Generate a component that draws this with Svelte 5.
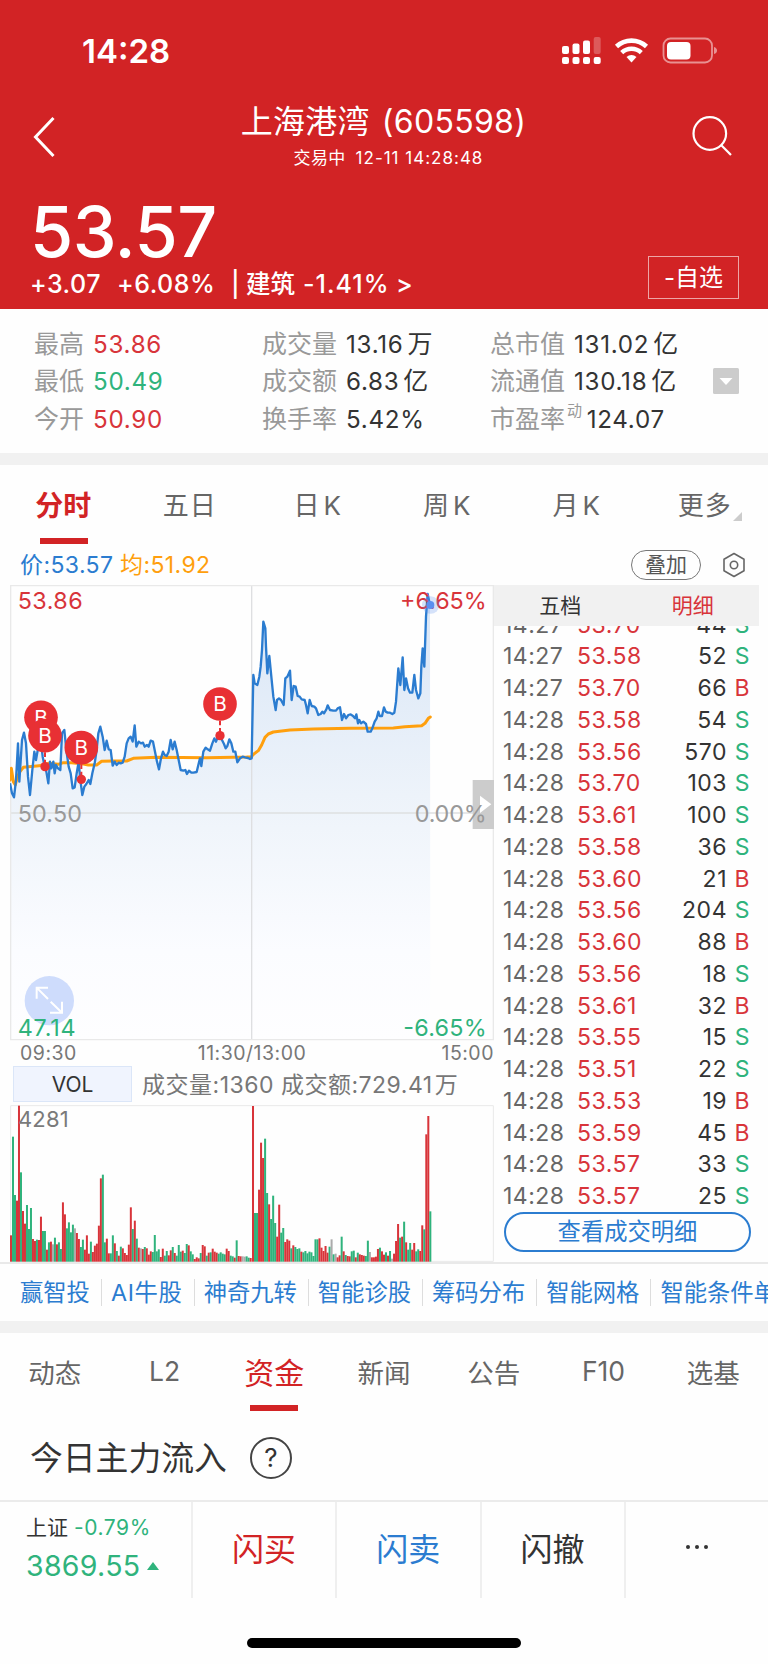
<script>
    const stats = [
        [
            { label: '最高', value: '53.86', tone: 'up' },
            { label: '最低', value: '50.49', tone: 'down' },
            { label: '今开', value: '50.90', tone: 'up' },
        ],
        [
            { label: '成交量', value: '13.16', unit: '万' },
            { label: '成交额', value: '6.83', unit: '亿' },
            { label: '换手率', value: '5.42%' },
        ],
        [
            { label: '总市值', value: '131.02', unit: '亿' },
            { label: '流通值', value: '130.18', unit: '亿' },
            { label: '市盈率', sup: '动', value: '124.07' },
        ],
    ];

    const periods = ['分时', '五日', '日K', '周K', '月K', '更多'];
    let period = $state('分时');

    const trades = [
        ['14:27', '53.70', 44, 'S'],
        ['14:27', '53.58', 52, 'S'],
        ['14:27', '53.70', 66, 'B'],
        ['14:28', '53.58', 54, 'S'],
        ['14:28', '53.56', 570, 'S'],
        ['14:28', '53.70', 103, 'S'],
        ['14:28', '53.61', 100, 'S'],
        ['14:28', '53.58', 36, 'S'],
        ['14:28', '53.60', 21, 'B'],
        ['14:28', '53.56', 204, 'S'],
        ['14:28', '53.60', 88, 'B'],
        ['14:28', '53.56', 18, 'S'],
        ['14:28', '53.61', 32, 'B'],
        ['14:28', '53.55', 15, 'S'],
        ['14:28', '53.51', 22, 'S'],
        ['14:28', '53.53', 19, 'B'],
        ['14:28', '53.59', 45, 'B'],
        ['14:28', '53.57', 33, 'S'],
        ['14:28', '53.57', 25, 'S'],
    ];

    const tools = ['赢智投', 'AI牛股', '神奇九转', '智能诊股', '筹码分布', '智能网格', '智能条件单'];

    const sections = ['动态', 'L2', '资金', '新闻', '公告', 'F10', '选基'];
    let section = $state('资金');

    // chart units are thirds of a pixel
    const price = '30,610 36,640 42,652 48,600 54,490 58,605 66,480 72,458 78,490 84,590 90,645 97,570 103,515 108,540 115,500 122,480 128,530 134,560 139,575 145,610 150,545 154,565 160,545 164,580 168,555 174,565 181,570 186,460 193,450 199,510 206,560 212,580 218,625 224,622 230,580 236,545 241,600 247,645 253,620 259,612 266,600 271,612 277,580 284,550 290,510 295,460 301,440 308,470 314,510 320,482 326,508 332,510 338,557 344,545 350,555 356,548 362,550 368,548 374,530 380,490 386,475 392,470 398,485 404,436 409,500 416,485 423,490 429,488 434,500 441,495 446,500 452,482 459,485 465,515 471,545 477,568 483,535 489,515 494,525 500,528 506,515 512,480 518,508 524,485 530,510 536,540 542,570 550,572 556,570 561,582 567,572 574,578 580,578 590,576 595,555 600,535 604,558 610,515 617,503 623,508 630,512 637,490 643,475 648,485 654,470 660,460 666,480 672,492 677,505 682,498 688,478 694,490 700,515 706,515 712,547 720,535 728,530 735,532 744,534 750,537 755,535 760,285 764,310 772,315 778,290 782,260 786,210 790,125 796,145 798,200 802,280 808,228 814,290 820,350 827,390 831,360 837,355 843,360 851,375 856,295 862,290 870,272 875,360 881,318 887,320 893,348 899,350 905,358 914,360 918,375 923,400 929,360 935,378 943,380 948,385 955,405 962,402 967,395 972,400 979,388 983,376 990,390 1000,392 1008,392 1013,385 1020,382 1026,420 1032,402 1038,415 1045,405 1052,403 1059,408 1065,415 1069,403 1074,430 1078,420 1083,430 1090,425 1098,432 1103,455 1112,455 1117,445 1124,425 1130,415 1135,395 1139,408 1146,408 1152,382 1157,395 1163,398 1170,398 1177,402 1183,398 1188,365 1195,265 1201,315 1208,232 1213,330 1218,295 1224,325 1230,338 1237,338 1243,285 1248,330 1255,355 1261,340 1264,260 1268,205 1273,260 1278,110 1283,42 1290,75';
    const average = '30,600 34,565 40,605 46,615 52,590 60,575 70,562 85,560 110,558 130,556 145,550 175,553 190,548 215,548 250,552 265,555 290,555 305,544 340,543 380,543 400,535 470,532 620,533 740,531 755,530 758,525 775,512 785,495 795,472 805,462 820,456 870,450 940,447 1050,445 1180,444 1215,440 1265,437 1275,430 1285,415 1291,411';

    // colour letter and top edge of every minute bar: r up, g down, x flat
    const morning = 'r437 g141 g316 r333 r48 g248 r364 r402 g346 g418 g355 r448 r454 g450 r451 r381 g424 g424 r480 g458 r456 x464 g444 r464 g458 g478 r338 r374 g416 g398 g428 g405 x416 r430 r448 g472 g450 r480 r437 r492 g456 r487 r468 r462 r408 r266 g255 g458 r447 r491 g491 g437 r461 g484 r498 g471 r476 r490 r496 r465 r353 g418 r393 g447 r474 x476 r478 g472 r476 r495 r485 g487 g436 g485 g479 r502 r477 g498 g484 r497 r482 g472 r490 g498 g466 g486 r483 g490 g463 r467 g485 g494 r508 r503 r506 g490 r466 r470 g498 r489 g488 r477 r486 r489 g492 g488 g492 g494 r477 r484 g498 g500 r504 g452 r499 r500 x500 x501 g500 g504 r505';
    const afternoon = 'r49 g370 g370 r300 r159 r205 g147 g310 r344 g388 g318 g400 r441 r345 g429 g415 r457 r449 r453 g476 r467 g472 g478 g476 r486 g488 g484 g491 g486 g488 g499 g449 g449 r446 r474 r484 r469 r489 g471 x449 g494 x492 r503 r497 g441 r485 g496 r499 r500 g485 g483 r503 g489 r494 r496 r498 g499 g453 x487 r503 r503 r501 r478 g474 r485 r495 g488 r498 g484 x507 r492 r454 r403 g444 r441 g396 r458 g480 g460 r480 r460 g485 g479 r484 r407 g419 r134 r79 g365';
    const fills = { r: '#d8343a', g: '#2fb37c', x: '#ababab' };

    function bars(source, from, to) {
        const list = source.split(' ');
        const step = (to - from) / list.length;
        return list.map((b, i) => ({
            x: from + i * step,
            w: step,
            y: Number(b.slice(1)),
            fill: fills[b[0]],
        }));
    }
    const volume = [...bars(morning, 30, 755), ...bars(afternoon, 756, 1294)];

    const pins = [
        { x: 123, y: 412, dot: 0 },
        { x: 135, y: 467, dot: 560 },
        { x: 244, y: 503, dot: 598 },
        { x: 660, y: 372, dot: 467 },
    ];
</script>

<div class="phone">
    <header>
        <div class="status">
            <span class="clock">14:28</span>
            <svg width="156" height="30" viewBox="562 36 156 30">
                <g fill="#fff">
                    <rect x="562" y="46" width="7" height="8" rx="2" />
                    <rect x="572.5" y="43.5" width="7" height="10.5" rx="2" />
                    <rect x="583" y="40.5" width="7" height="13.5" rx="2" />
                    <rect x="593.7" y="37" width="7" height="17" rx="2" opacity=".25" />
                    <rect x="562" y="57" width="7" height="7" rx="2" />
                    <rect x="572.5" y="57" width="7" height="7" rx="2" />
                    <rect x="583" y="57" width="7" height="7" rx="2" />
                    <rect x="593.7" y="57" width="7" height="7" rx="2" />
                    <path d="M631.500 62.500l-5-5.500a7.500 7.500 0 0 1 10 0z" />
                    <rect x="667" y="42" width="23.500" height="17.500" rx="4" />
                    <path d="M714 47q3 1 3 3.500t-3 3.500z" opacity=".5" />
                </g>
                <g fill="none" stroke="#fff">
                    <path d="M616.500 46.500a22 22 0 0 1 30 0" stroke-width="4.600" />
                    <path d="M621.700 52.700a14.200 14.200 0 0 1 19.600 0" stroke-width="4.400" />
                    <rect x="663.500" y="38.500" width="48.500" height="24" rx="7" stroke-width="1.800" opacity=".5" />
                </g>
            </svg>
        </div>
        <div class="nav">
            <svg width="22" height="42" viewBox="0 0 22 42" fill="none" stroke="#fff" stroke-width="3">
                <path d="M20.500 2L2.500 21l18 19" />
            </svg>
            <div class="title">
                <h1>上海港湾 <span>(605598)</span></h1>
                <p>交易中 <span>12-11 14:28:48</span></p>
            </div>
            <svg width="40" height="40" viewBox="0 0 40 40" fill="none" stroke="#fff" stroke-width="2.200">
                <circle cx="17.800" cy="17.500" r="16.300" />
                <path d="M28.800 28.800L39 39" />
            </svg>
        </div>
        <div class="quote">
            <div>
                <div class="last">53.57</div>
                <div class="change">
                    <span class="diff">+3.07</span>
                    <span class="pct">+6.08%</span>
                    <span class="bar">|</span>
                    <span class="cn">建筑</span>
                    <span class="sector">-1.41%</span>
                    <span class="gt">&gt;</span>
                </div>
            </div>
            <button class="watch">-自选</button>
        </div>
    </header>

    <section class="stats">
        {#each stats as column}
            <div class="column">
                {#each column as s}
                    <div class="stat">
                        <span class="label">{s.label}</span>
                        {#if s.sup}<sup>{s.sup}</sup>{/if}
                        <span class="value {s.tone ?? ''}">{s.value}{#if s.unit}<span class="unit">{s.unit}</span>{/if}</span>
                    </div>
                {/each}
            </div>
        {/each}
        <svg class="more" width="26" height="26" viewBox="0 0 26 26">
            <rect width="26" height="26" rx="1.500" fill="#ccc" />
            <path d="M6.500 10h13L13 17z" fill="#fff" />
        </svg>
    </section>

    <div class="gap"></div>

    <nav class="periods">
        {#each periods as p}
            <button class:active={p === period} class:candle={p.endsWith('K')} onclick={() => (period = p)}>
                <span>{p}</span>
                {#if p === '更多'}<i></i>{/if}
            </button>
        {/each}
    </nav>

    <div class="legend">
        <span class="now">价:53.57</span>
        <span class="avg">均:51.92</span>
        <button>叠加</button>
        <svg width="24" height="26" viewBox="0 0 24 26" fill="none" stroke="#666" stroke-width="1.600">
            <path d="M12 1.500l10 5.700v11.600l-10 5.700-10-5.700V7.200z" stroke-linejoin="round" />
            <circle cx="12" cy="13" r="3.700" />
        </svg>
    </div>

    <div class="board">
        <div class="charts">
            <svg width="484" height="456" viewBox="30 15 1452 1368">
                <defs>
                    <linearGradient id="area" x1="0" y1="0" x2="0" y2="1">
                        <stop offset="0" stop-color="#d8e5f6" />
                        <stop offset=".45" stop-color="#edf3fa" />
                        <stop offset=".8" stop-color="#fbfcff" />
                        <stop offset="1" stop-color="#fefeff" />
                    </linearGradient>
                </defs>
                <polygon points="30,1380 {price} 1291,1380" fill="url(#area)" />
                <g fill="none" stroke="#dedfe1" stroke-width="4">
                    <path d="M30 699H1482M755 17V1380" />
                    <path d="M32 17H1480V1379H32z" stroke="#e9e9e9" />
                </g>
                <rect x="1418" y="600" width="66" height="147" fill="#ccc" />
                <path d="M1440 647l34 26-34 26z" fill="#fff" />
                <circle cx="148" cy="1262" r="74" fill="#cedcfc" />
                <path d="M110 1256v-33h34M110 1223l34 34M186 1265v33h-36M186 1298l-34-33" fill="none" stroke="#fff" stroke-width="6" />
                <polyline points={average} fill="none" stroke="#ff9f0d" stroke-width="9" stroke-linejoin="round" stroke-linecap="round" />
                <polyline points={price} fill="none" stroke="#2b7cd0" stroke-width="7" stroke-linejoin="round" />
                <g font-size="70">
                    <text x="53" y="86" textLength="195" fill="#d8343a">53.86</text>
                    <text x="1200" y="86" textLength="260" fill="#d8343a">+6.65%</text>
                    <text x="53" y="726" textLength="193" fill="#999">50.50</text>
                    <text x="1244" y="726" textLength="216" fill="#999">0.00%</text>
                    <text x="53" y="1367" textLength="174" fill="#2fb37c">47.14</text>
                    <text x="1210" y="1367" textLength="250" fill="#2fb37c">-6.65%</text>
                </g>
                <circle cx="1292" cy="75" r="26" fill="#5b8ff0" opacity=".25" />
                <circle cx="1291" cy="75" r="12" fill="#5b8ff0" />
                {#each pins as pin}
                    {#if pin.dot}
                        <path d="M{pin.x} {pin.y + 50}V{pin.dot}" stroke="#e83034" stroke-width="6" stroke-dasharray="14 8" />
                        <circle cx={pin.x} cy={pin.dot} r="14" fill="#e83034" />
                    {/if}
                    <circle cx={pin.x} cy={pin.y} r="50.500" fill="#e83034" />
                    <text x={pin.x} y={pin.y + 22} font-size="62" text-anchor="middle" fill="#fff">B</text>
                {/each}
            </svg>
            <div class="axis">
                <span>09:30</span>
                <span>11:30/13:00</span>
                <span>15:00</span>
            </div>
            <div class="volume-head">
                <button>VOL</button>
                <span>成交量:1360 成交额:729.41<b>万</b></span>
            </div>
            <svg width="484" height="157" viewBox="30 46 1452 471">
                <path d="M32 48H1480V515H32z" fill="none" stroke="#e9e9e9" stroke-width="3" />
                {#each volume as v}
                    <rect x={v.x} y={v.y} width={v.w} height={516 - v.y} fill={v.fill} />
                {/each}
                <text x="54" y="111" font-size="66" textLength="152" fill="#7a7a7a">4281</text>
            </svg>
        </div>

        <aside>
            <div class="side-tabs">
                <span>五档</span>
                <span class="on">明细</span>
            </div>
            <div class="trades">
                <div class="scroll">
                    {#each trades as [time, cost, qty, side]}
                        <div class="trade">
                            <span class="time">{time}</span>
                            <span class="cost">{cost}</span>
                            <span class="qty">{qty}</span>
                            <span class="side {side === 'B' ? 'up' : 'down'}">{side}</span>
                        </div>
                    {/each}
                </div>
            </div>
            <button class="all">查看成交明细</button>
        </aside>
    </div>

    <div class="tools">
        {#each tools as tool}
            <span>{tool}</span>
        {/each}
    </div>

    <div class="gap"></div>

    <nav class="sections">
        {#each sections as s}
            <button class:active={s === section} onclick={() => (section = s)}>{s}</button>
        {/each}
    </nav>

    <div class="flow">
        <h2>今日主力流入</h2>
        <span class="help">?</span>
    </div>

    <footer>
        <div class="index">
            <div class="index-name">上证 <span>-0.79%</span></div>
            <div class="index-value">3869.55<i></i></div>
        </div>
        <button class="buy">闪买</button>
        <button class="sell">闪卖</button>
        <button>闪撤</button>
        <button class="dots"><i></i><i></i><i></i></button>
    </footer>
    <div class="home"><i></i></div>
</div>

<style>
    :global(body){
        margin: 0;
        background: #fff;
    }
    .phone{
        width: 768px;
        height: 1664px;
        overflow: hidden;
        background: #fefefe;
        color: #333;
        font-family: Inter, "Noto Sans CJK SC", sans-serif;
        white-space: nowrap;
    }
    .phone :global(svg){
        display: block;
        flex: none;
    }
    button{
        margin: 0;
        padding: 0;
        border: none;
        background: none;
        color: inherit;
        font-family: inherit;
        white-space: nowrap;
    }
    h1, h2, p{
        margin: 0;
        font-weight: 400;
    }
    .up{
        color: #d8343a;
    }
    .down{
        color: #2fb37c;
    }

    header{
        box-sizing: border-box;
        height: 309px;
        background: #d22325;
        color: #fff;
        overflow: hidden;
    }
    .status{
        display: flex;
        justify-content: space-between;
        align-items: center;
        height: 30px;
        padding: 36px 50px 0 82px;
    }
    .clock{
        font-size: 33px;
        font-weight: 600;
    }
    .nav{
        display: flex;
        justify-content: space-between;
        height: 72px;
        padding: 35px 36px 0 33px;
    }
    .nav > svg{
        margin-top: 15px;
    }
    .title{
        text-align: center;
        margin-left: 20px;
    }
    h1{
        font-size: 32px;
        line-height: 42px;
        letter-spacing: .2px;
    }
    h1 span{
        margin-left: 3px;
        letter-spacing: .3px;
    }
    .title p{
        font-size: 17px;
        line-height: 28px;
        margin-top: 1px;
        margin-left: 10px;
        letter-spacing: .3px;
    }
    .title p span{
        margin-left: 5px;
        letter-spacing: 1px;
    }
    .quote{
        display: flex;
        justify-content: space-between;
        padding: 20px 29px 0 30px;
    }
    .last{
        position: relative;
        top: 1px;
        font-size: 70px;
        font-weight: 500;
        line-height: 76px;
        letter-spacing: -.5px;
    }
    .change{
        display: flex;
        font-size: 25px;
        font-weight: 500;
        line-height: 30px;
        letter-spacing: .5px;
    }
    .diff{
        width: 87px;
    }
    .pct{
        width: 114px;
    }
    .bar{
        width: 15px;
    }
    .cn{
        width: 57px;
        font-size: 24.5px;
        letter-spacing: 0;
    }
    .sector{
        width: 93px;
        letter-spacing: 1px;
    }
    .watch{
        width: 91px;
        height: 43px;
        margin-top: 63px;
        border: 1.5px solid #eda5a6;
        font-size: 24px;
        line-height: 40px;
        color: #fff;
    }

    .stats{
        display: flex;
        height: 127px;
        padding: 17px 29px 0 34px;
    }
    .column{
        width: 228px;
    }
    .column:nth-child(3){
        width: 223px;
    }
    .stat{
        display: flex;
        height: 37.4px;
        line-height: 37.4px;
        font-size: 24.2px;
        letter-spacing: .7px;
    }
    .label{
        color: #999;
        font-size: 25px;
        margin-right: 9px;
        letter-spacing: 0;
    }
    sup{
        font-size: 15px;
        line-height: 19px;
        color: #999;
        margin-left: -7px;
        margin-right: 4px;
    }
    .unit{
        margin-left: 4px;
        font-size: 25px;
    }
    .more{
        margin-top: 42px;
    }

    .gap{
        height: 12px;
        background: #f1f1f1;
    }

    .periods{
        display: flex;
        height: 79px;
    }
    .periods button{
        position: relative;
        flex: 1;
        height: 77px;
        font-size: 26px;
        letter-spacing: 1px;
        color: #666;
    }
    .periods button.candle{
        padding-left: 3px;
        letter-spacing: 4px;
    }
    .periods button.active{
        font-size: 28px;
        letter-spacing: 0;
        font-weight: 600;
        color: #d22325;
    }
    .periods button.active::after{
        content: "";
        position: absolute;
        left: 40px;
        bottom: -2px;
        width: 48px;
        height: 6px;
        background: #d22325;
    }
    .periods i{
        position: absolute;
        right: 26px;
        bottom: 21px;
        border-left: 9px solid transparent;
        border-bottom: 9px solid #ccc;
    }

    .legend{
        display: flex;
        align-items: center;
        height: 41px;
        padding: 0 22px 0 20px;
        font-size: 23px;
        letter-spacing: .4px;
    }
    .legend span{
        margin-top: -3px;
    }
    .now{
        width: 100px;
        color: #2b7cd0;
    }
    .avg{
        flex: 1;
        color: #ff9f0d;
    }
    .legend button{
        width: 70px;
        height: 30px;
        margin-right: 21px;
        border: 1.5px solid #777;
        border-radius: 15px;
        font-size: 21px;
        line-height: 26px;
        color: #555;
    }

    .board{
        display: flex;
        height: 677px;
        padding: 0 9px 0 10px;
        border-bottom: 2px solid #e9e9e9;
    }
    .charts{
        width: 484px;
    }
    .axis{
        display: flex;
        height: 25px;
        line-height: 25px;
        font-size: 19.5px;
        letter-spacing: .5px;
        color: #777;
    }
    .axis span{
        flex: 1;
        text-align: center;
    }
    .axis span:first-child{
        text-align: left;
        text-indent: 10px;
    }
    .axis span:last-child{
        text-align: right;
    }
    .volume-head{
        display: flex;
        height: 39px;
        padding-left: 3px;
    }
    .volume-head button{
        box-sizing: border-box;
        width: 119px;
        height: 36px;
        margin-right: 10px;
        border: 1.5px solid #dbe6f8;
        background: #f0f4fe;
        font-size: 21px;
        color: #333;
    }
    .volume-head span{
        font-size: 23px;
        line-height: 38px;
        letter-spacing: .5px;
        color: #777;
    }
    .volume-head b{
        margin-left: 2px;
        font-weight: 400;
    }

    aside{
        flex: 1;
    }
    .side-tabs{
        display: flex;
        height: 41px;
        background: #f1f1f1;
        font-size: 21px;
        line-height: 42px;
        text-align: center;
    }
    .side-tabs span{
        flex: 1;
    }
    .side-tabs .on{
        color: #d8343a;
    }
    .trades{
        height: 586px;
        overflow: hidden;
    }
    .scroll{
        margin-top: -16.5px;
    }
    .trade{
        display: flex;
        height: 31.76px;
        line-height: 31.76px;
        padding: 0 9px;
        font-size: 23px;
        letter-spacing: .5px;
    }
    .time{
        width: 74px;
        color: #666;
    }
    .cost{
        width: 70px;
        color: #d8343a;
    }
    .qty{
        flex: 1;
        text-align: right;
    }
    .side{
        width: 23px;
        text-align: right;
    }
    .all{
        display: block;
        box-sizing: border-box;
        width: 247px;
        height: 40px;
        margin-left: 10px;
        border: 2px solid #2b7cd0;
        border-radius: 20px;
        font-size: 23.3px;
        line-height: 34px;
        color: #2b7cd0;
    }

    .tools{
        display: flex;
        align-items: center;
        height: 57px;
        padding-left: 20px;
        overflow: hidden;
        font-size: 23.3px;
        color: #2b7cd0;
    }
    .tools span{
        flex: none;
        line-height: 27px;
        padding-right: 11px;
        margin-right: 9px;
        border-right: 1.5px solid #ddd;
    }
    .tools span:nth-child(2){
        letter-spacing: .7px;
    }

    .sections{
        display: flex;
        height: 79px;
    }
    .sections button{
        position: relative;
        flex: 1;
        height: 76px;
        font-size: 26.5px;
        color: #666;
    }
    .sections button.active{
        font-size: 30px;
        color: #d22325;
    }
    .sections button.active::after{
        content: "";
        position: absolute;
        left: 31px;
        bottom: -2px;
        width: 48px;
        height: 6px;
        background: #d22325;
    }

    .flow{
        display: flex;
        align-items: center;
        box-sizing: border-box;
        height: 88px;
        padding: 3px 0 0 30px;
    }
    h2{
        font-size: 32.8px;
        line-height: 40px;
    }
    .help{
        width: 38px;
        height: 38px;
        margin-left: 23px;
        border: 2px solid #444;
        border-radius: 50%;
        font-size: 26px;
        line-height: 38px;
        text-align: center;
    }

    footer{
        display: flex;
        height: 96px;
        border-top: 2px solid #ebebeb;
    }
    .index{
        box-sizing: border-box;
        width: 191px;
        padding: 10px 0 0 26px;
        color: #2fb37c;
    }
    .index-name{
        font-size: 21px;
        line-height: 32px;
        color: #333;
    }
    .index-name span{
        letter-spacing: .6px;
        color: #2fb37c;
    }
    .index-value{
        display: flex;
        align-items: center;
        font-size: 28.5px;
        line-height: 44px;
        letter-spacing: .3px;
    }
    .index-value i{
        margin-left: 7px;
        border: 6.5px solid transparent;
        border-top: none;
        border-bottom: 8px solid #2fb37c;
    }
    footer button{
        flex: 1;
        padding-bottom: 6px;
        border-left: 2px solid #efefef;
        font-size: 32px;
    }
    .buy{
        color: #d22325;
    }
    .sell{
        color: #2b7cd0;
    }
    .dots{
        display: flex;
        justify-content: center;
        align-items: center;
        gap: 5px;
    }
    .dots i{
        width: 4px;
        height: 4px;
        border-radius: 50%;
        background: #333;
    }
    .home{
        display: flex;
        justify-content: center;
        padding-top: 40px;
    }
    .home i{
        width: 274px;
        height: 10px;
        border-radius: 5px;
        background: #000;
    }
</style>
